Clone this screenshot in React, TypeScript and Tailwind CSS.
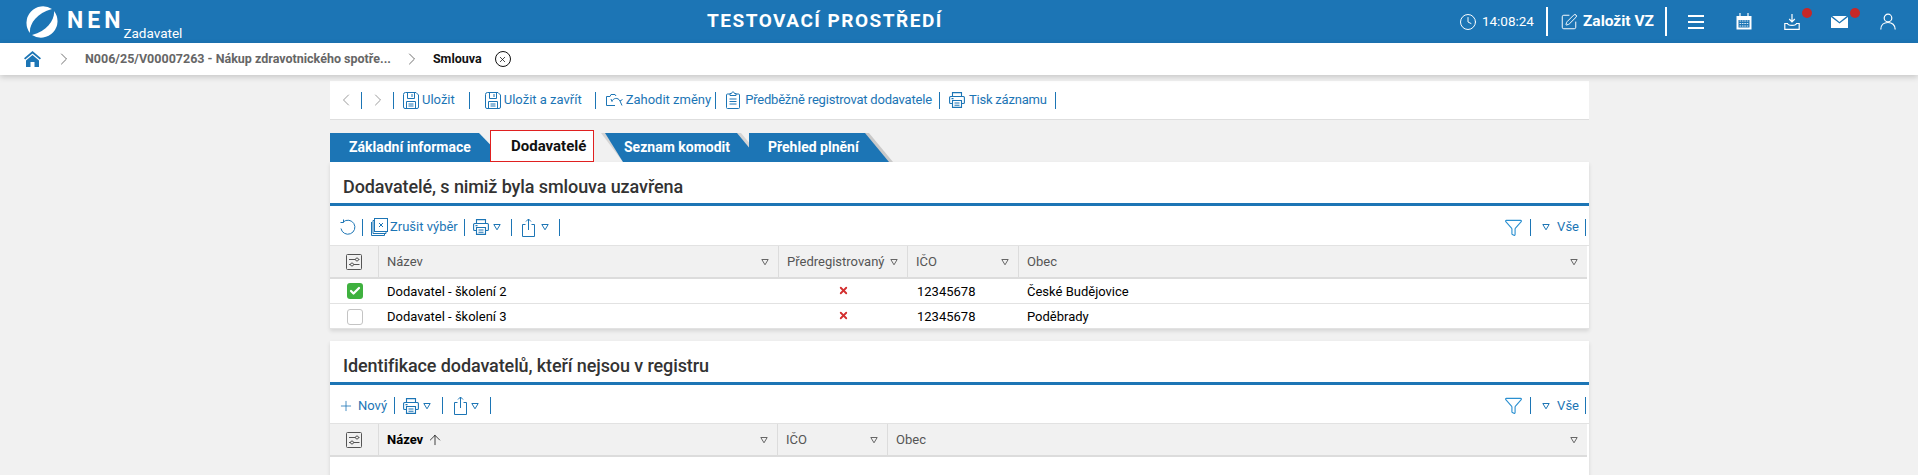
import type { ReactNode } from 'react';
import { Clock, SquarePen, Funnel, Plus, ArrowUp, X, Check, ChevronLeft, ChevronRight } from 'lucide-react';

const BLUE = '#1c75b5';

function Sep({ className = '' }: { className?: string }) {
  return <div className={`w-px h-[17px] bg-[#1c75b5] shrink-0 ${className}`} />;
}

function SaveIcon() {
  return (
    <svg width="16" height="17" viewBox="0 0 16 17" fill="none" stroke={BLUE} strokeWidth="1" className="shrink-0">
      <path d="M2.500 .5H13L15.500 3V15A1.500 1.500 0 0 1 14 16.500H2A1.500 1.500 0 0 1 .5 15V2.500A2 2 0 0 1 2.500 .5Z" />
      <path d="M4.500 .5V6.500H11.500V.5M9 2V5M3.500 16.500V9.500H12.500V16.500M5.500 12H10.500M5.500 14H10.500" />
    </svg>
  );
}

function UndoIcon() {
  return (
    <svg width="17" height="14" viewBox="0 0 17 14" fill="none" stroke={BLUE} strokeWidth="1" className="shrink-0">
      <path d="M.5 3.500V12.500H9M.5 3.500H4L5 1.500H9L10 3" />
      <path d="M6 8.500C7 5 12 4 14 8L16 12.500M14 8L16.500 6.500M6 8.500L5 6" />
    </svg>
  );
}

function ClipboardIcon() {
  return (
    <svg width="14" height="18" viewBox="0 0 14 18" fill="none" stroke={BLUE} strokeWidth="1" className="shrink-0">
      <path d="M4 3H1.500A1 1 0 0 0 .5 4V16.500A1 1 0 0 0 1.500 17.500H12.500A1 1 0 0 0 13.500 16.500V4A1 1 0 0 0 12.500 3H10" />
      <path d="M4 4.500V2.500H5.500C5.500 .5 8.500 .5 8.500 2.500H10V4.500Z" />
      <path d="M3.500 8H10.500M3.500 10.500H10.500M3.500 13H10.500" />
    </svg>
  );
}

function PrinterIcon() {
  return (
    <svg width="16" height="16" viewBox="0 0 16 16" fill="none" stroke={BLUE} strokeWidth="1.100" className="shrink-0">
      <path d="M3.500 4.500V.6H12.500V4.500" />
      <path d="M3.500 11.500H1.600A1 1 0 0 1 .6 10.500V5.500A1 1 0 0 1 1.600 4.500H14.400A1 1 0 0 1 15.400 5.500V10.500A1 1 0 0 1 14.400 11.500H12.500" />
      <path d="M3.500 8.500H12.500V15.400H3.500ZM5.500 11H10.500M5.500 13.200H10.500M2.500 6.600H4.500" />
    </svg>
  );
}

function SelectIcon() {
  return (
    <svg width="17" height="18" viewBox="0 0 17 18" fill="none" stroke={BLUE} strokeWidth="1" className="shrink-0">
      <rect x="3.500" y=".5" width="13" height="13" />
      <path d="M3.500 2.500H2V15.500H15V13.500M.5 4V17.500H13.500V15.500M8 5L12 9M12 5L8 9" />
    </svg>
  );
}

function RefreshIcon() {
  return (
    <svg width="17" height="17" viewBox="0 0 17 17" fill="none" stroke={BLUE} strokeWidth="1" className="shrink-0">
      <path d="M4.200 3A7 7 0 1 1 2 9.500" />
      <path d="M4.500 .5V3.500H1.500" />
    </svg>
  );
}

function ShareIcon() {
  return (
    <svg width="13" height="19" viewBox="0 0 13 19" fill="none" stroke={BLUE} strokeWidth="1" className="shrink-0">
      <path d="M3.500 6.500H.5V18.500H12.500V6.500H9.500M6.500 12V1M4 3.500L6.500 1L9 3.500" />
    </svg>
  );
}

function Tri({ color = BLUE }: { color?: string }) {
  return (
    <svg width="8" height="8" viewBox="0 0 8 8" fill="none" stroke={color} strokeWidth="1" className="shrink-0">
      <path d="M.8 1.500H7.200L4 6.800Z" />
    </svg>
  );
}

function SettingsBox() {
  return (
    <svg width="16" height="16" viewBox="0 0 16 16" fill="none" stroke="#555" strokeWidth="1">
      <rect x=".5" y=".5" width="15" height="15" rx="1" />
      <path d="M3 5.500H9.500M12.500 5.500H13.500M3 10.500H4.500M7.500 10.500H13.500" />
      <circle cx="11" cy="5.500" r="1.500" />
      <circle cx="6" cy="10.500" r="1.500" />
    </svg>
  );
}

function Logo() {
  return (
    <svg width="34" height="34" viewBox="0 0 34 34" fill="#fff" className="shrink-0">
      <path d="M27 4A16.500 16.500 0 0 0 5 28C4 20 11 8 27 4Z" />
      <path d="M7 30A16.500 16.500 0 0 0 29 6C30 14 23 26 7 30Z" />
    </svg>
  );
}

function HomeIcon() {
  return (
    <svg width="17" height="16" viewBox="0 0 17 16" fill={BLUE}>
      <path d="M8.500 0L17 7.200L15.800 8.600L8.500 2.500L1.200 8.600L0 7.200Z" />
      <path d="M8.500 4L15 9.500V16H10.500V11H6.500V16H2V9.500Z" />
    </svg>
  );
}

function CalendarIcon() {
  return (
    <svg width="16" height="17" viewBox="0 0 16 17" fill="none" className="shrink-0">
      <path d="M.5 3H15.500V16.500H.5Z" fill="#fff" />
      <path d="M4 0V3.500M12 0V3.500" stroke="#fff" strokeWidth="1.200" />
      <path d="M2.500 7H13.500V14.500H2.500Z" fill={BLUE} />
      <path d="M3.500 8H12.500M3.500 10.500H12.500M3.500 13H12.500" stroke="#dbe9f4" strokeWidth="1.200" strokeDasharray="1.600 .8" />
    </svg>
  );
}

function TrayDownIcon() {
  return (
    <svg width="16" height="16" viewBox="0 0 16 16" fill="none" stroke="#fff" strokeWidth="1.200" className="shrink-0">
      <path d="M8 0V7.500M5.200 5L8 7.800L10.800 5" />
      <path d="M3.500 9.500H.8V15.300H15.200V9.500H12.500C12 12 4 12 3.500 9.500Z" />
    </svg>
  );
}

function MailIcon() {
  return (
    <svg width="17" height="12" viewBox="0 0 17 12" className="shrink-0">
      <path d="M1.200 0H15.800L8.500 6Z" fill="#fff" />
      <path d="M0 1L8.500 7.600L17 1V12H0Z" fill="#fff" />
    </svg>
  );
}

function UserIcon() {
  return (
    <svg width="16" height="17" viewBox="0 0 16 17" fill="none" stroke="#fff" strokeWidth="1.200" className="shrink-0">
      <circle cx="8" cy="5" r="3.800" />
      <path d="M.8 16.500C.8 12 4 9.500 8 9.500C12 9.500 15.200 12 15.200 16.500" />
    </svg>
  );
}

function SectionTools({ children, className }: { children: ReactNode; className: string }) {
  return (
    <div className={`flex items-center justify-between text-[13px] text-[#1c75b5] border-b border-[#e2e2e2] ${className}`}>
      <div className="flex items-center">{children}</div>
      <div className="flex items-center">
        <Funnel size={19} strokeWidth={1.400} className="text-[#2a8fd0] mr-[7px]" />
        <Sep />
        <span className="ml-[11px] mr-[7px]"><Tri /></span>
        <span className="mr-[6px]">Vše</span>
        <Sep className="mr-[3px]" />
      </div>
    </div>
  );
}

function HeadCell({ className, children }: { className: string; children: ReactNode }) {
  return (
    <div className={`h-full pt-[1px] flex items-center justify-between border-r border-[#dcdcdc] text-[#555] text-[13px] pl-[8px] pr-[9px] ${className}`}>
      {children}
    </div>
  );
}

function Row({ checked, name, city }: { checked: boolean; name: string; city: string }) {
  return (
    <div className="h-[25px] pt-[1px] flex items-center text-[13px] text-black border-b border-[#e2e2e2]">
      <div className="w-[50px] flex justify-center shrink-0">
        {checked ? (
          <span className="w-[16px] h-[16px] -translate-y-[1px] rounded-[3px] bg-[#3fb13f] flex items-center justify-center">
            <Check size={12} strokeWidth={4.500} className="text-white" />
          </span>
        ) : (
          <span className="w-[16px] h-[16px] rounded-[3px] bg-white border border-[#c4c4c4]" />
        )}
      </div>
      <div className="w-[399px] pl-[7px] shrink-0">{name}</div>
      <div className="w-[129px] flex justify-center shrink-0">
        <X size={11} strokeWidth={4} className="text-[#d32f2f] -translate-y-[1px]" />
      </div>
      <div className="w-[111px] pl-[9px] shrink-0">12345678</div>
      <div className="pl-[8px]">{city}</div>
    </div>
  );
}

export default function App() {
  return (
    <div className="h-screen overflow-hidden bg-[#f1f1f1] font-['Roboto',sans-serif]">
      {/* Header */}
      <header className="relative h-[43px] bg-[#1c75b5] text-white flex items-center">
        <div className="flex items-center pl-[25px]">
          <Logo />
          <span className="ml-[8px] text-[23px] font-bold tracking-[4px] leading-none -translate-y-[1px]">NEN</span>
          <span className="-ml-[1px] text-[13.5px] leading-none translate-y-[12px]">Zadavatel</span>
        </div>
        <div className="absolute left-[707px] top-[10px] text-[19px] font-bold tracking-[1.500px] leading-[22px]">TESTOVACÍ PROSTŘEDÍ</div>
        <div className="ml-auto flex items-center h-full">
          <Clock size={18} strokeWidth={1.300} />
          <span className="ml-[5px] text-[13.5px]">14:08:24</span>
          <div className="w-[2px] h-[29px] bg-white ml-[12px]" />
          <SquarePen size={18} strokeWidth={1.300} className="ml-[12px]" />
          <span className="ml-[5px] text-[15.5px] font-bold">Založit VZ</span>
          <div className="w-[2px] h-[29px] bg-white ml-[11px]" />
          <div className="ml-[21px] w-[16px] flex flex-col gap-[4px]">
            <div className="h-[2px] bg-white" /><div className="h-[2px] bg-white" /><div className="h-[2px] bg-white" />
          </div>
          <div className="ml-[32px]"><CalendarIcon /></div>
          <div className="relative ml-[32px]">
            <TrayDownIcon />
            <span className="absolute -top-[6px] -right-[12px] w-[10px] h-[10px] rounded-full bg-[#c62828]" />
          </div>
          <div className="relative ml-[31px]">
            <MailIcon />
            <span className="absolute -top-[8px] -right-[12px] w-[10px] h-[10px] rounded-full bg-[#c62828]" />
          </div>
          <div className="ml-[32px] mr-[22px]"><UserIcon /></div>
        </div>
      </header>

      {/* Breadcrumb */}
      <nav className="relative h-[32px] bg-white flex items-center shadow-[0_2px_6px_rgba(0,0,0,0.18)] text-[12.5px]">
        <div className="ml-[24px]"><HomeIcon /></div>
        <ChevronRight size={20} strokeWidth={1} className="ml-[13px] text-[#555]" />
        <span className="ml-[11px] font-bold text-[#666]">N006/25/V00007263 - Nákup zdravotnického spotře...</span>
        <ChevronRight size={20} strokeWidth={1} className="ml-[11px] text-[#555]" />
        <span className="ml-[11px] font-bold text-[#111]">Smlouva</span>
        <span className="ml-[13px] w-[16px] h-[16px] rounded-full border border-[#111] flex items-center justify-center">
          <X size={9} strokeWidth={2} className="text-[#111]" />
        </span>
      </nav>

      <main className="w-[1259px] ml-[330px] mt-[6px]">
        {/* Top toolbar */}
        <div className="h-[39px] bg-white border-b border-[#dedede] flex items-center text-[13px] text-[#1c75b5]">
          <ChevronLeft size={20} strokeWidth={1} className="ml-[6px] text-[#888]" />
          <Sep className="ml-[5px]" />
          <ChevronRight size={20} strokeWidth={1} className="ml-[6px] text-[#888]" />
          <Sep className="ml-[5px]" />
          <div className="ml-[9px]"><SaveIcon /></div>
          <span className="ml-[3px]">Uložit</span>
          <Sep className="ml-[14px]" />
          <div className="ml-[15px]"><SaveIcon /></div>
          <span className="ml-[3px]">Uložit a zavřít</span>
          <Sep className="ml-[13px]" />
          <div className="ml-[10px]"><UndoIcon /></div>
          <span className="ml-[3px]">Zahodit změny</span>
          <Sep className="ml-[4px]" />
          <div className="ml-[10px]"><ClipboardIcon /></div>
          <span className="ml-[5px] tracking-[-0.2px]">Předběžně registrovat dodavatele</span>
          <Sep className="ml-[7px]" />
          <div className="ml-[9px]"><PrinterIcon /></div>
          <span className="ml-[4px] tracking-[-0.2px]">Tisk záznamu</span>
          <Sep className="ml-[8px]" />
        </div>

        {/* Tabs */}
        <div className="mt-[10px] h-[32px] flex items-end">
          <div className="relative h-[29px] w-[177px] shrink-0">
            <div className="absolute inset-0 bg-[#1c75b5] [clip-path:polygon(0_0,calc(100%-28px)_0,100%_100%,0_100%)] text-white text-[14px] font-bold flex items-center pl-[19px]">Základní informace</div>
          </div>
          <div className="relative h-[32px] w-[104px] -ml-[17px] shrink-0 bg-white border border-[#e02020] flex items-center pl-[20px] text-[15px] font-bold text-[#111]">Dodavatelé</div>
          <div className="relative h-[29px] w-[160px] ml-[11px] shrink-0">
            <div className="absolute inset-y-0 -left-[4px] right-0 bg-[#d4d4d4] [clip-path:polygon(0_0,calc(100%-24px)_0,100%_100%,22px_100%)]" />
            <div className="absolute inset-0 bg-[#1c75b5] [clip-path:polygon(0_0,calc(100%-28px)_0,calc(100%-4px)_100%,18px_100%)] text-white text-[14px] font-bold flex items-center pl-[19px]">Seznam komodit</div>
          </div>
          <div className="relative h-[29px] w-[144px] -ml-[16px] shrink-0">
            <div className="absolute inset-0 bg-[#c9c9c9] [clip-path:polygon(0_0,calc(100%-24px)_0,100%_100%,0_100%)]" />
            <div className="absolute inset-0 bg-[#1c75b5] [clip-path:polygon(0_0,calc(100%-28px)_0,calc(100%-4px)_100%,0_100%)] text-white text-[14px] font-bold flex items-center pl-[19px]">Přehled plnění</div>
          </div>
        </div>

        {/* Contracted suppliers */}
        <section className="bg-white shadow-[0_2px_4px_rgba(0,0,0,0.12)]">
          <h2 className="h-[41px] pt-[8px] flex items-center pl-[13px] text-[18px] font-medium text-[#333] tracking-[-0.1px]">Dodavatelé, s nimiž byla smlouva uzavřena</h2>
          <div className="h-[3px] bg-[#1c75b5]" />
          <SectionTools className="h-[40px] pt-[3px]">
            <div className="ml-[9px]"><RefreshIcon /></div>
            <Sep className="ml-[6px]" />
            <div className="ml-[8px]"><SelectIcon /></div>
            <span className="ml-[2px]">Zrušit výběr</span>
            <Sep className="ml-[6px]" />
            <div className="ml-[8px]"><PrinterIcon /></div>
            <span className="ml-[4px]"><Tri /></span>
            <Sep className="ml-[10px]" />
            <div className="ml-[10px]"><ShareIcon /></div>
            <span className="ml-[6px]"><Tri /></span>
            <Sep className="ml-[10px]" />
          </SectionTools>
          <div className="h-[33px] flex bg-[#f1f1f1] border-b-2 border-[#dcdcdc] mr-[2px]">
            <div className="w-[49px] shrink-0 flex items-center justify-center border-r border-[#dcdcdc]"><SettingsBox /></div>
            <HeadCell className="w-[400px] shrink-0">Název<Tri color="#666" /></HeadCell>
            <HeadCell className="w-[129px] shrink-0">Předregistrovaný<Tri color="#666" /></HeadCell>
            <HeadCell className="w-[111px] shrink-0">IČO<Tri color="#666" /></HeadCell>
            <HeadCell className="flex-1 border-r-0">Obec<Tri color="#666" /></HeadCell>
          </div>
          <Row checked name="Dodavatel - školení 2" city="České Budějovice" />
          <Row checked={false} name="Dodavatel - školení 3" city="Poděbrady" />
        </section>

        {/* Suppliers outside the register */}
        <section className="mt-[12px] bg-white shadow-[0_2px_4px_rgba(0,0,0,0.12)] h-[200px]">
          <h2 className="h-[41px] pt-[8px] flex items-center pl-[13px] text-[18px] font-medium text-[#333] tracking-[-0.1px]">Identifikace dodavatelů, kteří nejsou v registru</h2>
          <div className="h-[3px] bg-[#1c75b5]" />
          <SectionTools className="h-[39px] pt-[3px]">
            <Plus size={16} strokeWidth={1.200} className="ml-[8px]" />
            <span className="ml-[4px]">Nový</span>
            <Sep className="ml-[7px]" />
            <div className="ml-[8px]"><PrinterIcon /></div>
            <span className="ml-[4px]"><Tri /></span>
            <Sep className="ml-[11px]" />
            <div className="ml-[11px]"><ShareIcon /></div>
            <span className="ml-[4px]"><Tri /></span>
            <Sep className="ml-[11px]" />
          </SectionTools>
          <div className="h-[33px] flex bg-[#f1f1f1] border-b-2 border-[#dcdcdc] mr-[2px]">
            <div className="w-[49px] shrink-0 flex items-center justify-center border-r border-[#dcdcdc]"><SettingsBox /></div>
            <HeadCell className="w-[399px] shrink-0">
              <span className="flex items-center font-bold text-black">Název<ArrowUp size={16} strokeWidth={1.100} className="ml-[4px]" /></span>
              <Tri color="#666" />
            </HeadCell>
            <HeadCell className="w-[110px] shrink-0">IČO<Tri color="#666" /></HeadCell>
            <HeadCell className="flex-1 border-r-0">Obec<Tri color="#666" /></HeadCell>
          </div>
        </section>
      </main>
    </div>
  );
}
